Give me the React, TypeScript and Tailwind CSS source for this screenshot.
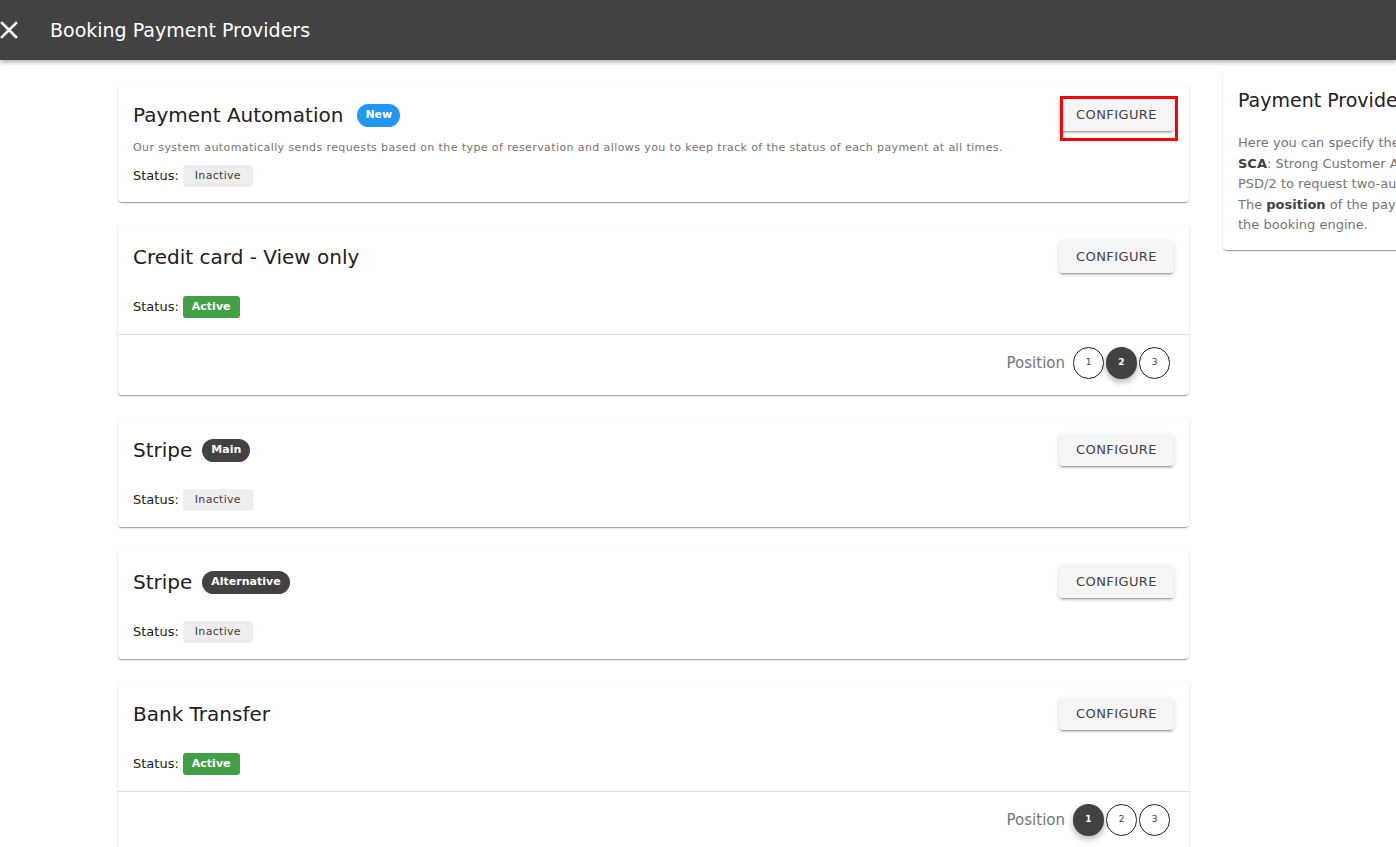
import React from "react";

type Provider = {
  title: string;
  badge?: { label: string; tone: "blue" | "dark" };
  description?: string;
  active: boolean;
  position?: number;
  highlighted?: boolean;
};

const providers: Provider[] = [
  {
    title: "Payment Automation",
    badge: { label: "New", tone: "blue" },
    description:
      "Our system automatically sends requests based on the type of reservation and allows you to keep track of the status of each payment at all times.",
    active: false,
    highlighted: true,
  },
  { title: "Credit card - View only", active: true, position: 2 },
  { title: "Stripe", badge: { label: "Main", tone: "dark" }, active: false },
  { title: "Stripe", badge: { label: "Alternative", tone: "dark" }, active: false },
  { title: "Bank Transfer", active: true, position: 1 },
];

const cardShadow =
  "shadow-[0_2px_1px_-1px_rgba(0,0,0,0.2),0_1px_1px_0_rgba(0,0,0,0.14),0_1px_3px_0_rgba(0,0,0,0.12)]";

function ConfigureButton({ highlighted }: { highlighted?: boolean }) {
  return (
    <div className="relative shrink-0">
      <button className="h-[32px] w-[115px] rounded-[4px] bg-[#f5f5f5] text-[13px] uppercase tracking-[0.4px] text-[#424242] shadow-[0_3px_1px_-2px_rgba(0,0,0,0.2),0_2px_2px_0_rgba(0,0,0,0.14),0_1px_5px_0_rgba(0,0,0,0.12)]">
        Configure
      </button>
      {highlighted && (
        <div className="pointer-events-none absolute -top-[3px] left-[1px] h-[45px] w-[118px] border-[3px] border-[#ff0000]" />
      )}
    </div>
  );
}

function StatusChip({ active }: { active: boolean }) {
  return active ? (
    <span className="inline-flex h-[22px] items-center rounded-[3px] bg-[#43a047] px-[9px] text-[11px] font-semibold text-white">
      Active
    </span>
  ) : (
    <span className="inline-flex h-[22px] items-center rounded-[3px] bg-[#eeeeee] px-[12px] text-[11px] tracking-[0.3px] text-[#424242]">
      Inactive
    </span>
  );
}

function PositionPicker({ value }: { value: number }) {
  return (
    <div className="flex items-center justify-end border-t border-[#e0e0e0] pb-[16px] pr-[19px] pt-[12px]">
      <span className="mr-[8px] text-[15px] text-[#757575]">Position</span>
      <div className="flex gap-[2px]">
        {[1, 2, 3].map((n) =>
          n === value ? (
            <span
              key={n}
              className="flex h-[32px] w-[31px] items-center justify-center rounded-full bg-[#424242] text-[9px] font-semibold text-white shadow-[0_3px_6px_rgba(0,0,0,0.3)]"
            >
              {n}
            </span>
          ) : (
            <span
              key={n}
              className="flex h-[32px] w-[31px] items-center justify-center rounded-full border border-[#212121] text-[9px] text-[#424242]"
            >
              {n}
            </span>
          )
        )}
      </div>
    </div>
  );
}

function ProviderCard({ p }: { p: Provider }) {
  return (
    <div className={`rounded-[4px] bg-white ${cardShadow}`}>
      <div className={`px-[15px] pt-[16px] ${p.description ? "pb-[15px]" : "pb-[16px]"}`}>
        <div className="flex items-center justify-between">
          <div className="flex items-center">
            <h2 className="text-[20px] leading-[28px] text-[#212121]">{p.title}</h2>
            {p.badge && (
              <span
                className={`inline-flex h-[23px] items-center rounded-full text-[11px] font-semibold text-white ${
                  p.badge.tone === "blue" ? "ml-[14px] bg-[#2196f3] px-[8px]" : "ml-[10px] bg-[#424242] px-[9px]"
                }`}
              >
                {p.badge.label}
              </span>
            )}
          </div>
          <ConfigureButton highlighted={p.highlighted} />
        </div>
        {p.description ? (
          <p className="mt-[9px] text-[11px] leading-[16px] tracking-[0.4px] text-[#757575]">{p.description}</p>
        ) : null}
        <div className={`flex items-center gap-[4px] ${p.description ? "mt-[9px]" : "mt-[23px]"}`}>
          <span className="text-[13px] text-[#212121]">Status:</span>
          <StatusChip active={p.active} />
        </div>
      </div>
      {p.position ? <PositionPicker value={p.position} /> : null}
    </div>
  );
}

export default function App() {
  return (
    <div className="h-screen w-screen overflow-hidden bg-white font-['DejaVu_Sans',sans-serif]">
      <header className="relative z-10 flex h-[60px] items-center bg-[#424242] shadow-[0_2px_5px_rgba(0,0,0,0.35)]">
        <svg width="18" height="18" viewBox="0 0 18 18" aria-hidden>
          <path d="M2 2 L16 16 M16 2 L2 16" stroke="white" strokeWidth="2.6" strokeLinecap="square" />
        </svg>
        <h1 className="ml-[32px] text-[19px] text-white">Booking Payment Providers</h1>
      </header>

      <div className="flex gap-[34px] pl-[118px]">
        <main className="flex w-[1071px] shrink-0 flex-col gap-[23px] pt-[23px]">
          {providers.map((p, i) => (
            <ProviderCard key={i} p={p} />
          ))}
        </main>

        <aside className="w-[380px] shrink-0 pt-[11px]">
          <div className={`rounded-[4px] bg-white px-[15px] pb-[14px] pt-[16px] ${cardShadow}`}>
            <h3 className="whitespace-nowrap text-[19px] leading-[26px] text-[#212121]">Payment Providers</h3>
            <p className="mt-[20px] whitespace-nowrap text-[13px] leading-[20.5px] text-[#757575]">
              Here you can specify the payment methods available
              <br />
              <b className="font-semibold text-[#424242]">SCA</b>: Strong Customer Authentication, required by
              <br />
              PSD/2 to request two-authentication factor for payments.
              <br />
              The <b className="font-semibold text-[#424242]">position</b> of the payment methods sets their order in
              <br />
              the booking engine.
            </p>
          </div>
        </aside>
      </div>
    </div>
  );
}
